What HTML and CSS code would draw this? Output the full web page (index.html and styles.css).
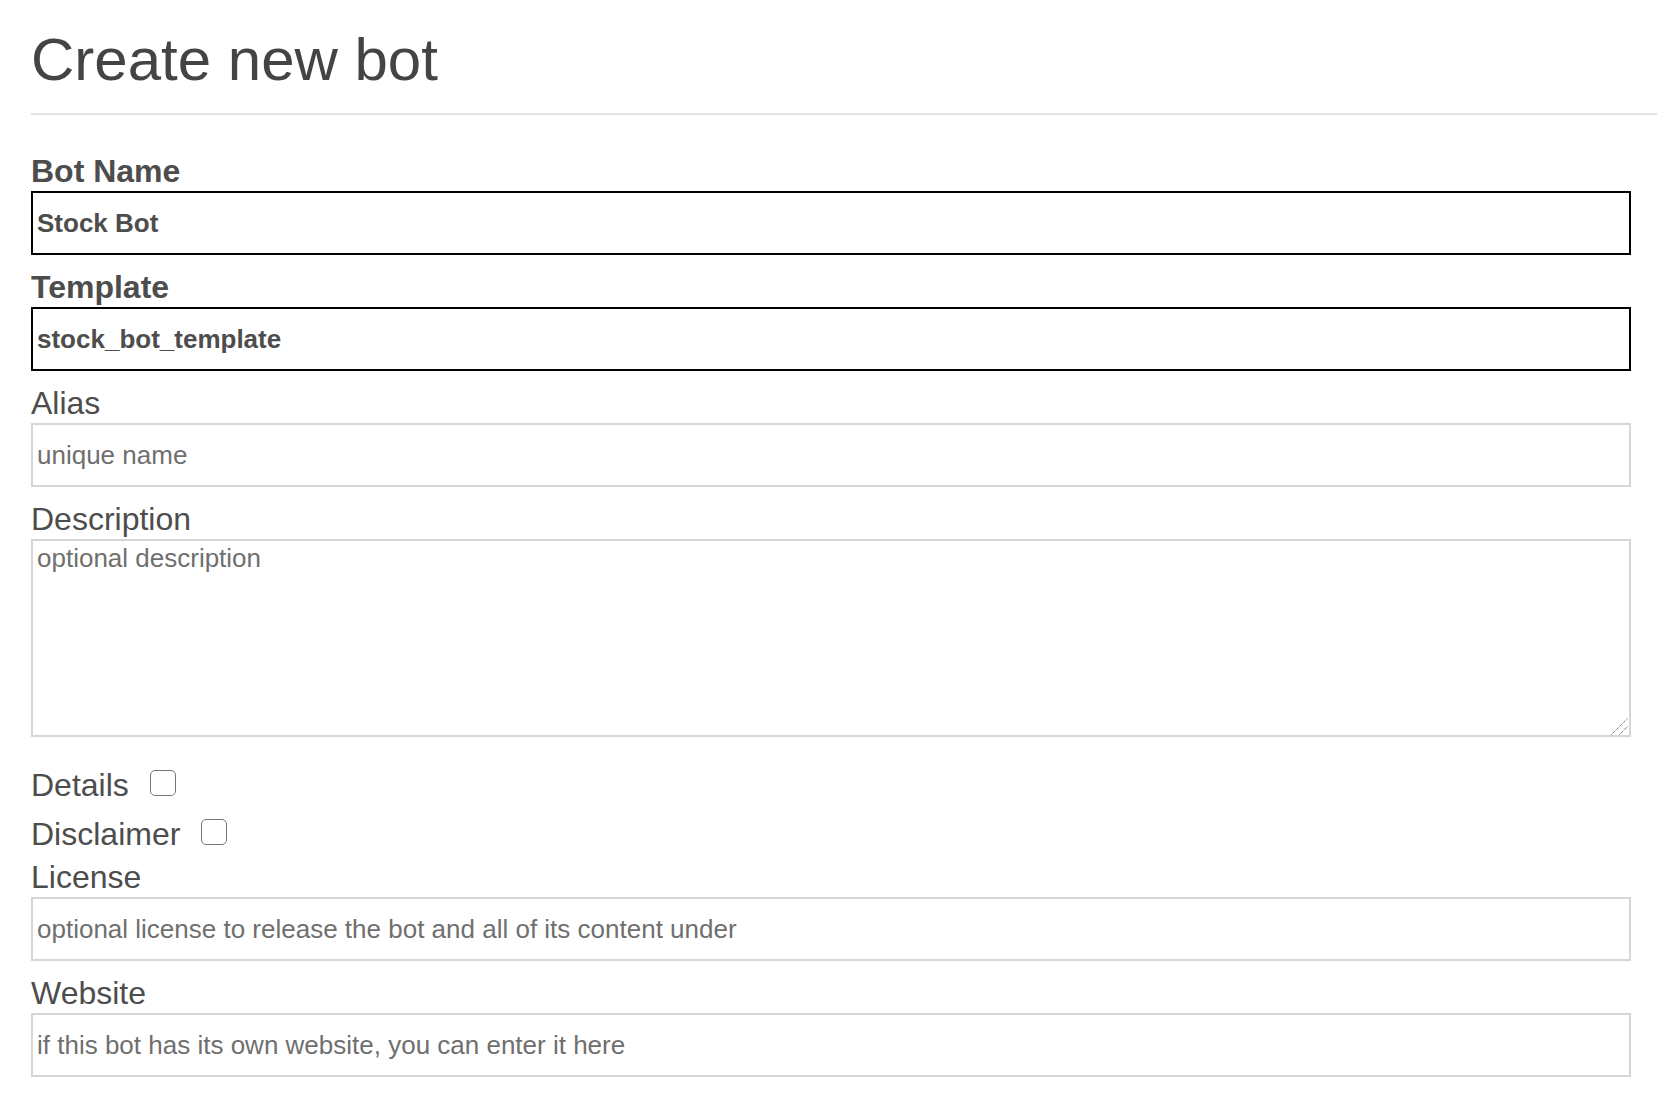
FILE: index.html
```html
<!DOCTYPE html>
<html lang="en">
<head>
    <meta charset="UTF-8">
    <meta name="viewport" content="width=device-width, initial-scale=1.0">
    <title>Create new bot</title>
    <link rel="stylesheet" href="styles.css">
</head>

<body>
    <div class="container">
        <h1>Create new bot</h1>
        <hr class="rule" />

        <form class="bot-form">
            <label class="field-label strong" for="name">Bot Name</label>
            <input class="field fixed" id="name" type="text" value="Stock Bot">

            <label class="field-label strong" for="template">Template</label>
            <input class="field fixed" id="template" type="text" value="stock_bot_template">

            <label class="field-label" for="alias">Alias</label>
            <input class="field" id="alias" type="text" placeholder="unique name">

            <label class="field-label" for="description">Description</label>
            <div class="area-wrap">
                <textarea class="field area" id="description" placeholder="optional description"></textarea>
                <!-- resize grip -->
                <svg class="grip" width="17" height="17" viewBox="0 0 17 17">
                    <line x1="0.5" y1="16.5" x2="16.5" y2="0.5" />
                    <line x1="8.5" y1="16.5" x2="16.5" y2="8.5" />
                </svg>
            </div>

            <label class="check-row first">Details<input class="check" type="checkbox"></label>
            <label class="check-row">Disclaimer<input class="check" type="checkbox"></label>

            <label class="field-label after-check" for="license">License</label>
            <input class="field" id="license" type="text" placeholder="optional license to release the bot and all of its content under">

            <label class="field-label" for="website">Website</label>
            <input class="field" id="website" type="text" placeholder="if this bot has its own website, you can enter it here">
        </form>
    </div>
</body>
</html>
```

FILE: styles.css
```css
body {
    margin: 0;
    padding: 0;
    background-color: #fff;
    font-family: "Liberation Sans", Arial, sans-serif;
    color: #4d4d4d;
}

.container {
    padding: 26px 26px 0 31px;
    overflow: hidden;
}

h1 {
    margin: 0;
    font-size: 60px;
    font-weight: normal;
    line-height: 67px;
    color: #444;
}

.rule {
    border: none;
    height: 2px;
    background-color: #e2e2e2;
    margin: 20px -26px 24px 0;
}

.bot-form {
    width: 1600px;
}

.field-label {
    display: block;
    padding-top: 14px;
    font-size: 32px;
    line-height: 36px;
    color: #4d4d4d;
}
.field-label.strong {
    font-weight: bold;
}
.field-label.after-check {
    padding-top: 7px;
}

.field {
    display: block;
    box-sizing: border-box;
    width: 1600px;
    height: 64px;
    margin: 2px 0 0 0;
    padding: 0 4px;
    border: solid 2px #d6d6d6;
    border-radius: 0;
    background-color: #fff;
    font-family: "Liberation Sans", Arial, sans-serif;
    font-size: 26px;
    color: #4d4d4d;
    outline: none;
}
.field::placeholder {
    color: #6f6f6f;
}
.field.fixed {
    border-color: #000;
    font-weight: bold;
}

.area-wrap {
    position: relative;
}
.field.area {
    height: 198px;
    padding: 2px 4px;
    line-height: 30px;
    resize: none;
}
.grip {
    position: absolute;
    right: 3px;
    bottom: 2px;
}
.grip line {
    stroke: #444;
    stroke-width: 1;
    stroke-dasharray: 1 1;
}

.check-row {
    display: block;
    padding-top: 13px;
    font-size: 32px;
    line-height: 36px;
}
.check-row.first {
    padding-top: 30px;
}

.check {
    -webkit-appearance: none;
    appearance: none;
    display: inline-block;
    box-sizing: border-box;
    width: 26px;
    height: 26px;
    margin: 0 0 0 21px;
    border: solid 1.5px #767676;
    border-radius: 5px;
    background-color: #fff;
    vertical-align: baseline;
}
```
